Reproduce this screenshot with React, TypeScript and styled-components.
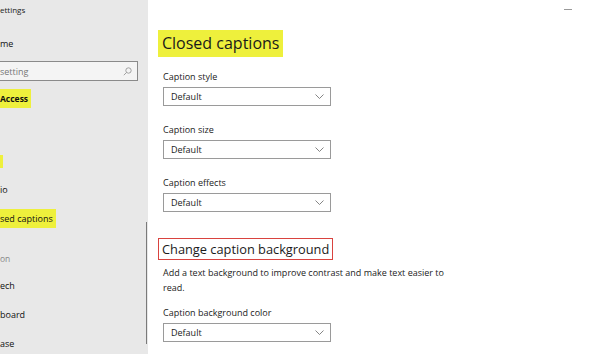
import React from "react";
import styled, { createGlobalStyle } from "styled-components";

const GlobalStyle = createGlobalStyle`
  html, body {
    margin: 0;
    padding: 0;
    background: #ffffff;
    overflow: hidden;
  }
  body {
    font-family: "Open Sans", "Noto Sans", sans-serif;
    color: #1a1a1a;
  }
`;

const Window = styled.div`
  display: flex;
  width: 590px;
  height: 354px;
  overflow: hidden;
`;

const Sidebar = styled.nav`
  position: relative;
  display: flex;
  flex-direction: column;
  width: 148px;
  flex-shrink: 0;
  background: #e8e8e8;
  overflow: hidden;
`;

const AppTitle = styled.div`
  height: 20px;
  line-height: 20px;
  font-size: 8px;
  color: #222;
`;

const NavItem = styled.div<{ $top?: number }>`
  display: flex;
  align-items: center;
  height: 20px;
  margin-top: ${(p) => p.$top ?? 8}px;
  font-size: 9px;
  color: #111;
  white-space: nowrap;
`;

const Highlight = styled.span<{ $bold?: boolean }>`
  display: inline-block;
  height: 19px;
  line-height: 19px;
  background: #eef03c;
  padding-right: 3px;
  font-size: ${(p) => (p.$bold ? 8.5 : 9)}px;
  font-weight: ${(p) => (p.$bold ? 700 : 400)};
`;

const HighlightSliver = styled.div<{ $top: number }>`
  width: 3px;
  height: 13px;
  margin-top: ${(p) => p.$top}px;
  background: #eef03c;
`;

const GroupHeader = styled(NavItem)`
  font-size: 8.5px;
  color: #888;
`;

const SearchBox = styled.div`
  display: flex;
  align-items: center;
  justify-content: space-between;
  box-sizing: border-box;
  height: 20px;
  width: 138px;
  margin-top: 8px;
  border: 1px solid #8a8a8a;
  border-left: none;
  background: #f4f4f4;
  padding-right: 5px;
  font-size: 9px;
  color: #777;
`;

const ScrollThumb = styled.div`
  position: absolute;
  right: 1px;
  top: 222px;
  width: 1px;
  height: 122px;
  background: #7a7a7a;
`;

const Main = styled.main`
  flex: 1;
  display: flex;
  flex-direction: column;
  padding-left: 10px;
`;

const TitleBar = styled.div`
  display: flex;
  justify-content: flex-end;
  align-items: flex-start;
  height: 24px;
  padding-right: 18px;
`;

const MinimizeGlyph = styled.div`
  flex: 0 0 8px;
  height: 0;
  margin-top: 9px;
  border-top: 1px solid #999;
`;

const PageTitle = styled.h1`
  align-self: flex-start;
  margin: 6px 0 0 0;
  padding: 0 4px;
  height: 27px;
  line-height: 27px;
  background: #eef03c;
  font-size: 16px;
  font-weight: 400;
  color: #1a1a1a;
`;

const Field = styled.div<{ $top?: number }>`
  display: flex;
  flex-direction: column;
  margin-top: ${(p) => p.$top ?? 17}px;
  padding-left: 5px;
`;

const FieldLabel = styled.label`
  font-size: 9px;
  line-height: 14px;
  color: #222;
`;

const Select = styled.div`
  display: flex;
  align-items: center;
  justify-content: space-between;
  box-sizing: border-box;
  margin-top: 3px;
  width: 168px;
  height: 19px;
  border: 1px solid #9a9a9a;
  padding: 0 6px 0 7px;
  font-size: 9px;
  color: #222;
`;

const SectionTitle = styled.h2`
  align-self: flex-start;
  margin: 26px 0 0 0;
  padding: 0 3px;
  height: 20px;
  line-height: 20px;
  border: 1px solid #d9433f;
  font-size: 12.8px;
  font-weight: 400;
  color: #1a1a1a;
`;

const Description = styled.p`
  margin: 5px 0 0 5px;
  width: 290px;
  font-size: 9px;
  line-height: 15px;
  color: #222;
`;

function Chevron() {
  return (
    <svg width="9" height="5" viewBox="0 0 9 5">
      <path d="M0.5 0.5 L4.5 4.5 L8.5 0.5" fill="none" stroke="#777" strokeWidth="0.9" />
    </svg>
  );
}

function SearchIcon() {
  return (
    <svg width="9" height="9" viewBox="0 0 9 9">
      <circle cx="5.5" cy="3.5" r="2.7" fill="none" stroke="#999" strokeWidth="0.9" />
      <path d="M3.6 5.4 L0.8 8.2" stroke="#999" strokeWidth="0.9" />
    </svg>
  );
}

function Dropdown({ label, value, top }: { label: string; value: string; top?: number }) {
  return (
    <Field $top={top}>
      <FieldLabel>{label}</FieldLabel>
      <Select>
        <span>{value}</span>
        <Chevron />
      </Select>
    </Field>
  );
}

export default function App() {
  return (
    <>
      <GlobalStyle />
      <Window>
        <Sidebar>
          <AppTitle>ettings</AppTitle>
          <NavItem $top={13}>me</NavItem>
          <SearchBox>
            <span>setting</span>
            <SearchIcon />
          </SearchBox>
          <NavItem $top={7}>
            <Highlight $bold>Access</Highlight>
          </NavItem>
          <HighlightSliver $top={47} />
          <NavItem $top={11}>io</NavItem>
          <NavItem $top={9}>
            <Highlight>sed captions</Highlight>
          </NavItem>
          <GroupHeader $top={20}>on</GroupHeader>
          <NavItem $top={7}>ech</NavItem>
          <NavItem $top={9}>board</NavItem>
          <NavItem $top={9}>ase</NavItem>
          <ScrollThumb />
        </Sidebar>
        <Main>
          <TitleBar>
            <MinimizeGlyph />
          </TitleBar>
          <PageTitle>Closed captions</PageTitle>
          <Dropdown label="Caption style" value="Default" top={13} />
          <Dropdown label="Caption size" value="Default" />
          <Dropdown label="Caption effects" value="Default" />
          <SectionTitle>Change caption background</SectionTitle>
          <Description>
            Add a text background to improve contrast and make text easier to read.
          </Description>
          <Dropdown label="Caption background color" value="Default" top={11} />
        </Main>
      </Window>
    </>
  );
}
